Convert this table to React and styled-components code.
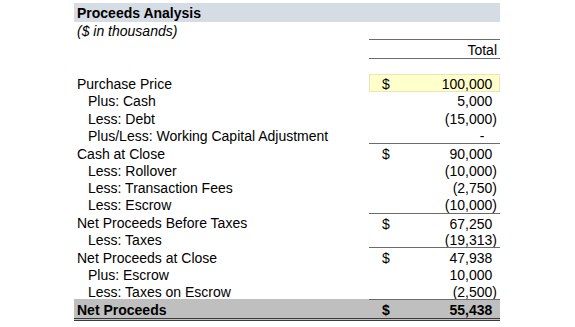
import styled, { createGlobalStyle } from "styled-components"

const GlobalStyle = createGlobalStyle`
    body {
        margin: 0;
        background: #fff;
        font-family: "Liberation Sans", Arial, sans-serif;
        color: #000;
    }
`

const rows = [
    { label: "Purchase Price", dollar: true, value: "100,000", highlight: true },
    { label: "Plus: Cash", indent: true, value: "5,000" },
    { label: "Less: Debt", indent: true, value: "(15,000", neg: true },
    { label: "Plus/Less: Working Capital Adjustment", indent: true, dash: true },
    { label: "Cash at Close", dollar: true, value: "90,000", line: true },
    { label: "Less: Rollover", indent: true, value: "(10,000", neg: true },
    { label: "Less: Transaction Fees", indent: true, value: "(2,750", neg: true },
    { label: "Less: Escrow", indent: true, value: "(10,000", neg: true },
    { label: "Net Proceeds Before Taxes", dollar: true, value: "67,250", line: true },
    { label: "Less: Taxes", indent: true, value: "(19,313", neg: true },
    { label: "Net Proceeds at Close", dollar: true, value: "47,938", line: true },
    { label: "Plus: Escrow", indent: true, value: "10,000" },
    { label: "Less: Taxes on Escrow", indent: true, value: "(2,500", neg: true },
]

export default function App() {
    return (
        <>
            <GlobalStyle />
            <Sheet>
                <Title>Proceeds Analysis</Title>
                <Row>
                    <Subtitle>($ in thousands)</Subtitle>
                    <div />
                </Row>
                <Row>
                    <Label />
                    <HeadCell>Total</HeadCell>
                </Row>
                <Row />
                {rows.map((r) => (
                    <Row key={r.label}>
                        <Label indent={r.indent}>{r.label}</Label>
                        <Value line={r.line} highlight={r.highlight}>
                            <Dollar>{r.dollar ? "$" : ""}</Dollar>
                            {r.dash ? (
                                <Amount>
                                    <Dash>-</Dash>
                                    <Paren ghost>)</Paren>
                                </Amount>
                            ) : (
                                <Amount>
                                    {r.value}
                                    <Paren ghost={!r.neg}>)</Paren>
                                </Amount>
                            )}
                        </Value>
                    </Row>
                ))}
                <TotalRow>
                    <Label bold>Net Proceeds</Label>
                    <Value line bold>
                        <Dollar>$</Dollar>
                        <Amount>
                            55,438
                            <Paren ghost>)</Paren>
                        </Amount>
                    </Value>
                </TotalRow>
            </Sheet>
        </>
    )
}

const Sheet = styled.div`
    margin-left: 74px;
    padding-top: 3px;
    width: 426px;
    font-size: 14px;
`
const Title = styled.div`
    box-sizing: border-box;
    height: 19px;
    padding: 2px 0 0 3px;
    line-height: 17px;
    background-color: #D6DCE4;
    font-weight: bold;
`
const Row = styled.div`
    display: grid;
    grid-template-columns: 295px 131px;
    height: 17.33px;
    align-items: stretch;
`
const Subtitle = styled.div`
    padding: 1px 0 0 3px;
    font-style: italic;
    display: flex;
    align-items: center;
`
const Label = styled.div`
    box-sizing: border-box;
    display: flex;
    align-items: center;
    padding-top: 2px;
    padding-left: ${props => props.indent ? "14px" : "3px"};
    font-weight: ${props => props.bold ? "bold" : "normal"};
    white-space: nowrap;
`
const HeadCell = styled.div`
    box-sizing: border-box;
    border-top: 1px solid #6b6b6b;
    border-bottom: 1px solid #6b6b6b;
    display: flex;
    align-items: center;
    justify-content: flex-end;
    padding: 2px 3px 0 0;
`
const Value = styled.div`
    box-sizing: border-box;
    display: flex;
    align-items: center;
    justify-content: space-between;
    padding: 2px 3px 0 13px;
    font-weight: ${props => props.bold ? "bold" : "normal"};
    border-top: ${props => props.line ? "1px solid #6b6b6b" : "none"};
    background-color: ${props => props.highlight ? "#FFFFCC" : "transparent"};
    outline: ${props => props.highlight ? "1px solid #EDE6B0" : "none"};
    outline-offset: -1px;
`
const Dollar = styled.span``
const Amount = styled.span`
    white-space: nowrap;
`
const Dash = styled.span`
    padding-right: 8px;
`
const Paren = styled.span`
    visibility: ${props => props.ghost ? "hidden" : "visible"};
`
const TotalRow = styled(Row)`
    box-sizing: border-box;
    height: 22px;
    background-color: #BFBFBF;
    border-bottom: 3px double #3a3a3a;
`
